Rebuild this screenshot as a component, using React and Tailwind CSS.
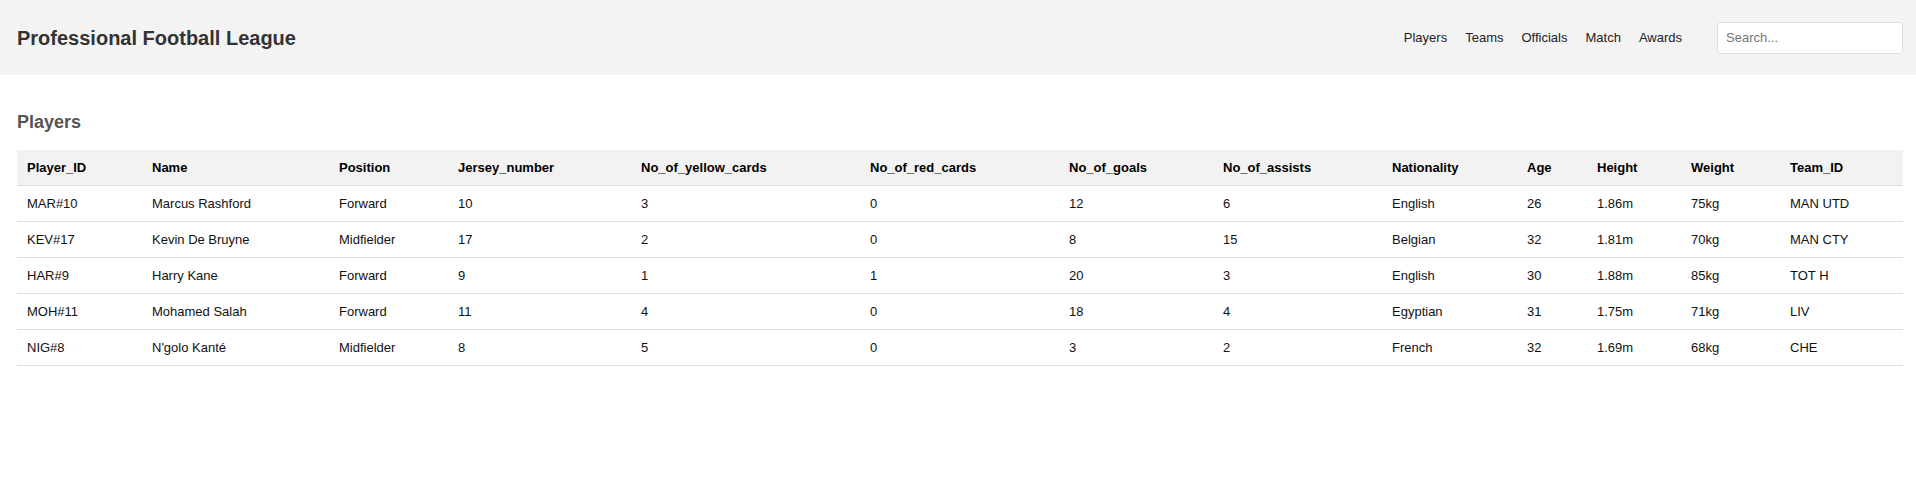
import React from "react";

const columns = [
    { key: "id", label: "Player_ID", w: "w-[125px]" },
    { key: "name", label: "Name", w: "w-[187px]" },
    { key: "position", label: "Position", w: "w-[119px]" },
    { key: "jersey", label: "Jersey_number", w: "w-[183px]" },
    { key: "yellow", label: "No_of_yellow_cards", w: "w-[229px]" },
    { key: "red", label: "No_of_red_cards", w: "w-[199px]" },
    { key: "goals", label: "No_of_goals", w: "w-[154px]" },
    { key: "assists", label: "No_of_assists", w: "w-[169px]" },
    { key: "nationality", label: "Nationality", w: "w-[135px]" },
    { key: "age", label: "Age", w: "w-[70px]" },
    { key: "height", label: "Height", w: "w-[94px]" },
    { key: "weight", label: "Weight", w: "w-[99px]" },
    { key: "team", label: "Team_ID", w: "w-[123px]" },
];

const players = [
    { id: "MAR#10", name: "Marcus Rashford", position: "Forward", jersey: 10, yellow: 3, red: 0, goals: 12, assists: 6, nationality: "English", age: 26, height: "1.86m", weight: "75kg", team: "MAN UTD" },
    { id: "KEV#17", name: "Kevin De Bruyne", position: "Midfielder", jersey: 17, yellow: 2, red: 0, goals: 8, assists: 15, nationality: "Belgian", age: 32, height: "1.81m", weight: "70kg", team: "MAN CTY" },
    { id: "HAR#9", name: "Harry Kane", position: "Forward", jersey: 9, yellow: 1, red: 1, goals: 20, assists: 3, nationality: "English", age: 30, height: "1.88m", weight: "85kg", team: "TOT H" },
    { id: "MOH#11", name: "Mohamed Salah", position: "Forward", jersey: 11, yellow: 4, red: 0, goals: 18, assists: 4, nationality: "Egyptian", age: 31, height: "1.75m", weight: "71kg", team: "LIV" },
    { id: "NIG#8", name: "N'golo Kanté", position: "Midfielder", jersey: 8, yellow: 5, red: 0, goals: 3, assists: 2, nationality: "French", age: 32, height: "1.69m", weight: "68kg", team: "CHE" },
];

const navLinks = ["Players", "Teams", "Officials", "Match", "Awards"];

export default function App() {
    return (
        <div className="min-h-screen bg-white font-['Liberation_Sans',Arial,sans-serif]">
            {/* top bar */}
            <header className="h-[75px] bg-[#f3f3f3] pl-[17px] pr-[13px] flex items-center justify-between">
                <h1 className="text-[20px] font-bold text-[#333]">
                    Professional Football League
                </h1>
                <div className="flex items-center">
                    <nav className="flex items-center gap-[18px] text-[13px] text-[#222]">
                        {navLinks.map((link) => (
                            <a key={link} href="#" className="hover:underline">
                                {link}
                            </a>
                        ))}
                    </nav>
                    <input
                        type="text"
                        placeholder="Search..."
                        className="ml-[35px] w-[186px] h-[32px] px-[8px] text-[13px] bg-white border border-[#ddd] rounded-[4px] placeholder:text-[#757575] outline-none"
                    />
                </div>
            </header>

            <main className="pl-[17px] pr-[13px] pt-[34px]">
                <h2 className="text-[18px] font-bold text-[#555] mb-[14px]">
                    Players
                </h2>
                <table className="w-full table-fixed border-collapse text-[13px] text-[#111]">
                    <thead>
                        <tr className="bg-[#f2f2f2] border-b border-[#ddd]">
                            {columns.map((col) => (
                                <th
                                    key={col.key}
                                    className={`${col.w} px-[10px] py-[10px] leading-[15px] text-left font-bold text-black`}
                                >
                                    {col.label}
                                </th>
                            ))}
                        </tr>
                    </thead>
                    <tbody>
                        {players.map((p) => (
                            <tr key={p.id} className="border-b border-[#ddd]">
                                {columns.map((col) => (
                                    <td
                                        key={col.key}
                                        className="px-[10px] py-[10px] leading-[15px]"
                                    >
                                        {p[col.key]}
                                    </td>
                                ))}
                            </tr>
                        ))}
                    </tbody>
                </table>
            </main>
        </div>
    );
}
